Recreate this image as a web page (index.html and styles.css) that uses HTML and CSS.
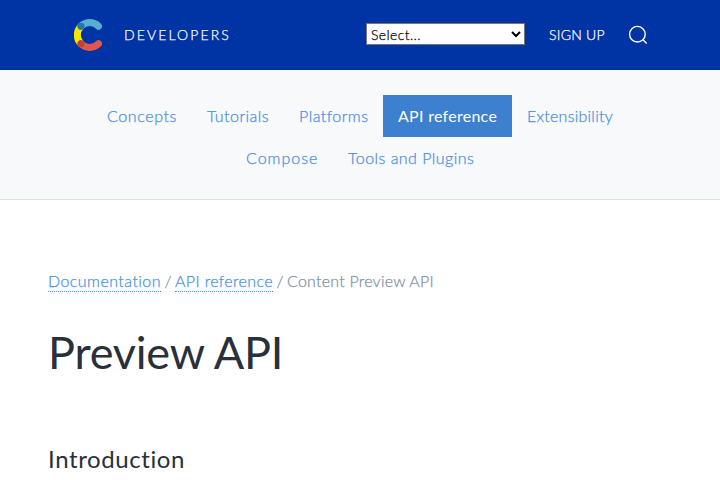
FILE: index.html
```html
<!DOCTYPE html>
<html lang="en">
<head>
<meta charset="utf-8">
<title>Preview API</title>
<link rel="stylesheet" href="styles.css">
</head>
<body>
<header class="header">
  <a class="brand">
    <svg class="logo" width="28" height="32" viewBox="0 0 28 32" fill="none" stroke-width="7" stroke-linecap="round">
      <path d="M7 7.2A12.4 12.4 0 0 0 7 24.8" stroke="#fae501"/>
      <path d="M7 7.2A12.4 12.4 0 0 1 24.5 7.2" stroke="#56aed2"/>
      <path d="M7 24.8A12.4 12.4 0 0 0 24.5 24.8" stroke="#e05751"/>
      <circle cx="7" cy="7.2" r="3.5" fill="#2478a3"/>
      <circle cx="7" cy="24.8" r="3.5" fill="#bc4339"/>
    </svg>
    <span class="brand-name">DEVELOPERS</span>
  </a>
  <div class="tools">
    <select class="picker"><option>Select...</option></select>
    <a class="signup">SIGN UP</a>
    <svg class="search" width="20" height="20" viewBox="0 0 20 20" fill="none" stroke="#fff" stroke-width="1.4">
      <circle cx="9.4" cy="9.2" r="7.8"/><path d="M14.9 14.7L18.7 18.5"/>
    </svg>
  </div>
</header>
<nav class="nav">
  <a class="nav-link concepts">Concepts</a><a class="nav-link tutorials">Tutorials</a><a class="nav-link platforms">Platforms</a><a class="nav-link active">API reference</a><a class="nav-link extensibility">Extensibility</a><a class="nav-link compose">Compose</a><a class="nav-link plugins">Tools and Plugins</a>
</nav>
<main class="main">
  <div class="crumbs"><a class="crumb docs">Documentation</a><span class="slash">/</span><a class="crumb ref">API reference</a><span class="slash">/</span><span class="current">Content Preview API</span></div>
  <h1 class="title">Preview API</h1>
  <h2 class="subtitle">Introduction</h2>
</main>
</body>
</html>
```
FILE: styles.css
```css
* { box-sizing: border-box; }
body { margin: 0; height: 480px; overflow: hidden; background: #fff; color: #2a3039; font-family: Lato, "Liberation Sans", sans-serif; font-size: 16px; font-weight: 300; font-variant-ligatures: none; -webkit-text-stroke: 0.25px; }
.header { height: 70px; padding: 0 72px 0 74px; background: #0033a3; color: #fff; display: flex; align-items: center; justify-content: space-between; }
.brand { display: flex; align-items: center; gap: 22px; }
.logo, .search { display: block; }
.brand-name { font-size: 14px; letter-spacing: 2.1px; margin-top: -2px; }
.tools { display: flex; align-items: center; }
.picker { width: 159px; height: 22px; margin-top: -2px; font: 300 14px Lato, sans-serif; letter-spacing: 0.4px; color: #000; background-color: #fff; border: 1px solid #767676; border-radius: 0; padding: 0; }
.signup { width: 56px; margin: -2px 23px 0 24px; font-size: 14px; white-space: nowrap; letter-spacing: 0.25px; }
.nav { height: 130px; padding: 25px 90px 0; background: #f7f9fb; border-bottom: 1px solid #d8e1e6; display: flex; flex-wrap: wrap; align-content: flex-start; justify-content: center; }
.nav-link { height: 42px; padding: 0 15px; line-height: 41px; color: #4a90e2; white-space: nowrap; letter-spacing: 0.47px; }
.concepts { width: 100px; letter-spacing: 0.6px; }
.tutorials { width: 92px; }
.platforms { width: 99px; }
.active { width: 129px; background: #3c80cf; color: #fff; font-weight: 400; letter-spacing: 0.28px; -webkit-text-stroke: 0; }
.extensibility { width: 116px; letter-spacing: 0.25px; }
.compose { width: 102px; letter-spacing: 1px; }
.plugins { width: 156px; }
.main { padding: 71px 48px 0; }
.crumbs { display: flex; height: 21px; color: #8091a5; line-height: 19px; }
.crumb { height: 21px; color: #4a90e2; border-bottom: 1px dotted #4a90e2; white-space: nowrap; letter-spacing: 0.35px; }
.docs { width: 113px; letter-spacing: 0.45px; }
.ref { width: 98px; }
.slash { width: 14px; text-align: center; }
.current { letter-spacing: 0.23px; }
.title { margin: 32px 0 0; font-size: 45px; line-height: 56px; font-weight: 400; letter-spacing: -0.2px; -webkit-text-stroke: 0; }
.subtitle { margin: 64px 0 0; font-size: 24px; line-height: 30px; font-weight: 400; letter-spacing: 0.6px; -webkit-text-stroke: 0; }
```
